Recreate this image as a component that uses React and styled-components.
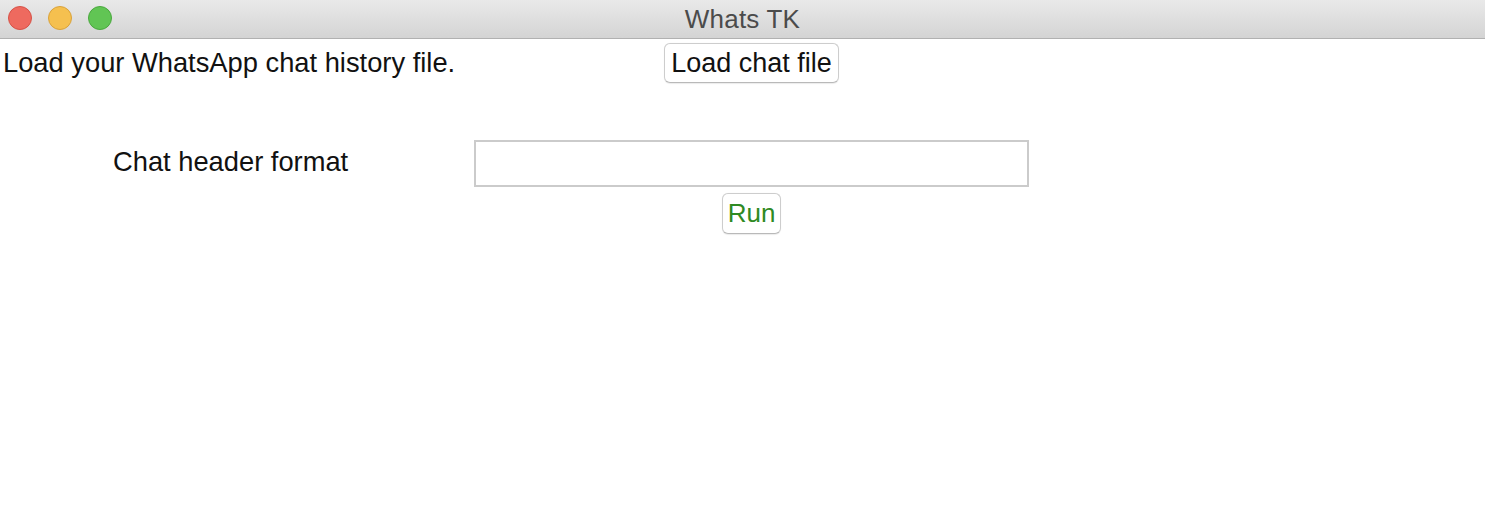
import React from "react";
import styled, { createGlobalStyle } from "styled-components";

const GlobalStyle = createGlobalStyle`
  html, body {
    margin: 0;
    padding: 0;
    background: #ffffff;
    font-family: "Liberation Sans", Arial, sans-serif;
  }
`;

const Window = styled.div`
  width: 1485px;
  height: 506px;
  display: flex;
  flex-direction: column;
  background: #ffffff;
  overflow: hidden;
`;

const TitleBar = styled.header`
  height: 38px;
  flex-shrink: 0;
  position: relative;
  display: flex;
  align-items: center;
  justify-content: center;
  background: linear-gradient(#e9e9e9, #d4d4d4);
  border-bottom: 1px solid #b1b1b1;
`;

const Lights = styled.div`
  position: absolute;
  left: 8px;
  top: 6px;
  display: flex;
  gap: 16px;
`;

const Light = styled.span`
  width: 24px;
  height: 24px;
  border-radius: 50%;
  box-sizing: border-box;
  background: ${({ fill }) => fill};
  border: 1px solid ${({ edge }) => edge};
`;

const Title = styled.div`
  font-size: 26px;
  color: #4b4b4b;
  letter-spacing: 0.2px;
`;

const Body = styled.div`
  display: grid;
  grid-template-columns: 474px 555px;
  grid-template-rows: 44px 55px 47px 47px;
  align-items: center;
  padding-top: 2px;
`;

const Label = styled.div`
  font-size: 27.3px;
  color: #111;
  padding-left: ${({ indent }) => `${indent}px`};
  margin-top: ${({ mt }) => `${mt || 0}px`};
  white-space: nowrap;
`;

const Cell = styled.div`
  display: flex;
  justify-content: center;
  align-items: ${({ top }) => (top ? "flex-start" : "center")};
  height: 100%;
`;

const Button = styled.button`
  font-family: "Liberation Sans", Arial, sans-serif;
  font-size: ${({ size }) => `${size}px`};
  color: ${({ color }) => color};
  background: #ffffff;
  border: 1px solid #cdcdcd;
  border-bottom-color: #b9b9b9;
  border-radius: 6px;
  height: ${({ h }) => `${h}px`};
  padding: 0 ${({ pad }) => `${pad}px`};
  box-shadow: 0 0.5px 1px rgba(0, 0, 0, 0.08);
  margin-top: ${({ mt }) => `${mt || 0}px`};
`;

const Entry = styled.input`
  width: 555px;
  height: 47px;
  box-sizing: border-box;
  border: 2px solid #cbcbcb;
  background: #ffffff;
  outline: none;
  font-size: 24px;
`;

const Spacer = styled.div`
  grid-column: 1 / span 2;
`;

export default function App() {
  return (
    <Window>
      <GlobalStyle />
      <TitleBar>
        <Lights>
          <Light fill="#ee6a5f" edge="#d65247" />
          <Light fill="#f5c04f" edge="#d9a23b" />
          <Light fill="#61c554" edge="#4aa83e" />
        </Lights>
        <Title>Whats TK</Title>
      </TitleBar>
      <Body>
        <Label indent={3}>Load your WhatsApp chat history file.</Label>
        <Cell>
          <Button size={27} color="#111" h={40} pad={6}>
            Load chat file
          </Button>
        </Cell>
        <Spacer />
        <Label indent={113} mt={-3}>Chat header format</Label>
        <Entry />
        <div />
        <Cell top>
          <Button size={26} color="#2f8a23" h={41} pad={5} mt={6}>
            Run
          </Button>
        </Cell>
      </Body>
    </Window>
  );
}
